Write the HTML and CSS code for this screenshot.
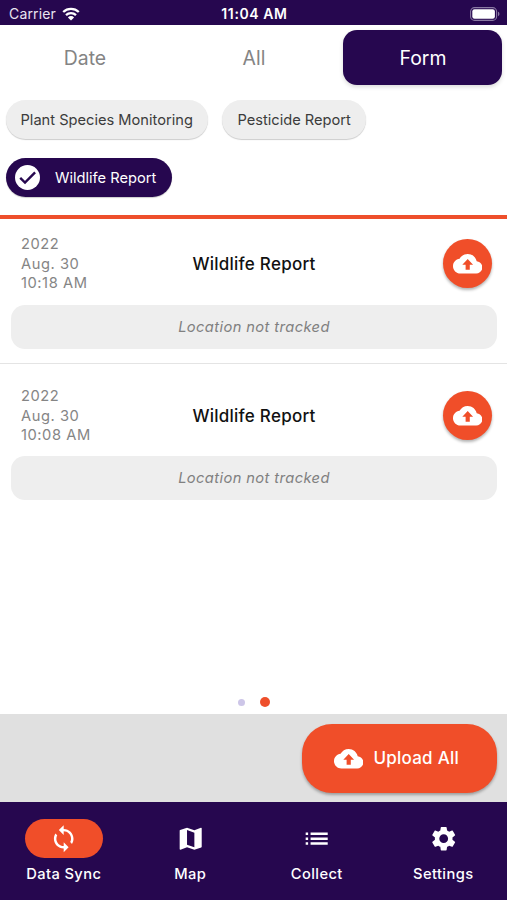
FILE: index.html
```html
<!DOCTYPE html>
<html lang="en">
<head>
    <meta charset="UTF-8">
    <title>Data Sync</title>
    <link rel="stylesheet" href="styles.css">
</head>
<body>
    <svg class="sprite" width="0" height="0">
        <symbol id="cloud" viewBox="0 0 24 24">
            <path d="M19.35 10.04C18.67 6.59 15.64 4 12 4 9.11 4 6.6 5.64 5.35 8.04 2.34 8.36 0 10.91 0 14c0 3.31 2.69 6 6 6h13c2.76 0 5-2.24 5-5 0-2.64-2.05-4.78-4.65-4.96zM13.7 12.8v4.2h-3.4v-4.2H7.6L12 8.1l4.4 4.7H13.7z"/>
        </symbol>
    </svg>
    <div class="app">
        <div class="status-bar">
            <div class="carrier">
                <span>Carrier</span>
                <svg class="wifi" viewBox="0 0 18 14">
                    <path d="M1.2 5a11.2 11.2 0 0 1 15.6 0" fill="none" stroke="#fff" stroke-width="2.3"/>
                    <path d="M4 8.2a7.2 7.2 0 0 1 10 0" fill="none" stroke="#fff" stroke-width="2.3"/>
                    <path d="M9 13.6L5.9 10.4a4.4 4.4 0 0 1 6.2 0z" fill="#fff"/>
                </svg>
            </div>
            <span class="time">11:04 AM</span>
            <div class="battery-wrap">
                <svg class="battery" viewBox="0 0 30 14">
                    <rect x=".6" y=".6" width="26" height="12.8" rx="4" fill="none" stroke="#8a79a3" stroke-width="1.1"/>
                    <rect x="2.3" y="2.3" width="22.6" height="9.4" rx="2.2" fill="#fff"/>
                    <path d="M28 4.8c1.9.6 1.9 3.8 0 4.4z" fill="#8a79a3"/>
                </svg>
            </div>
        </div>

        <div class="tabs">
            <div class="tab">Date</div>
            <div class="tab">All</div>
            <div class="tab active">Form</div>
        </div>

        <div class="chips">
            <div class="chip">Plant Species Monitoring</div>
            <div class="chip">Pesticide Report</div>
            <div class="chip selected">
                <svg class="check" viewBox="0 0 24 24"><circle cx="12" cy="12" r="12"/><path d="M5 12.4l4.6 4.5L19.3 7"/></svg>
                Wildlife Report
            </div>
        </div>

        <div class="list">
            <div class="item">
                <div class="row">
                    <div class="date">2022<br>Aug. 30<br>10:18 AM</div>
                    <div class="name">Wildlife Report</div>
                    <div class="upload"><svg class="icon"><use href="#cloud"/></svg></div>
                </div>
                <div class="location">Location not tracked</div>
            </div>
            <div class="item">
                <div class="row">
                    <div class="date">2022<br>Aug. 30<br>10:08 AM</div>
                    <div class="name">Wildlife Report</div>
                    <div class="upload"><svg class="icon"><use href="#cloud"/></svg></div>
                </div>
                <div class="location">Location not tracked</div>
            </div>
        </div>

        <div class="dots">
            <span class="dot"></span>
            <span class="dot current"></span>
        </div>

        <div class="actions">
            <div class="upload-all">
                <svg class="icon"><use href="#cloud"/></svg>
                <span>Upload All</span>
            </div>
        </div>

        <div class="nav">
            <div class="nav-item">
                <div class="pill on"><svg class="icon" viewBox="0 0 24 24"><path d="M12 4V1L8 5l4 4V6c3.31 0 6 2.69 6 6 0 1.01-.25 1.97-.7 2.8l1.46 1.46C19.54 15.03 20 13.57 20 12c0-4.42-3.58-8-8-8zm0 14c-3.31 0-6-2.69-6-6 0-1.01.25-1.97.7-2.8L5.24 7.74C4.46 8.97 4 10.43 4 12c0 4.42 3.58 8 8 8v3l4-4-4-4v3z"/></svg></div>
                <span>Data Sync</span>
            </div>
            <div class="nav-item">
                <div class="pill"><svg class="icon" viewBox="0 0 24 24"><path d="M20.5 3l-.16.03L15 5.1 9 3 3.36 4.9c-.21.07-.36.25-.36.48V20.5c0 .28.22.5.5.5l.16-.03L9 18.9l6 2.1 5.64-1.9c.21-.07.36-.25.36-.48V3.5c0-.28-.22-.5-.5-.5zM15 19l-6-2.11V5l6 2.11V19z"/></svg></div>
                <span>Map</span>
            </div>
            <div class="nav-item">
                <div class="pill"><svg class="icon" viewBox="0 0 24 24"><path d="M3 13h2v-2H3v2zm0 4h2v-2H3v2zm0-8h2V7H3v2zm4 4h14v-2H7v2zm0 4h14v-2H7v2zM7 7v2h14V7H7z"/></svg></div>
                <span>Collect</span>
            </div>
            <div class="nav-item">
                <div class="pill"><svg class="icon" viewBox="0 0 24 24"><path d="M19.14 12.94c.04-.3.06-.61.06-.94 0-.32-.02-.64-.07-.94l2.03-1.58c.18-.14.23-.41.12-.61l-1.92-3.32c-.12-.22-.37-.29-.59-.22l-2.39.96c-.5-.38-1.03-.7-1.62-.94l-.36-2.54c-.04-.24-.24-.41-.48-.41h-3.84c-.24 0-.43.17-.47.41l-.36 2.54c-.59.24-1.13.57-1.62.94l-2.39-.96c-.22-.08-.47 0-.59.22L2.74 8.87c-.12.21-.08.47.12.61l2.03 1.58c-.05.3-.09.63-.09.94s.02.64.07.94l-2.03 1.58c-.18.14-.23.41-.12.61l1.92 3.32c.12.22.37.29.59.22l2.39-.96c.5.38 1.03.7 1.62.94l.36 2.54c.05.24.24.41.48.41h3.84c.24 0 .44-.17.47-.41l.36-2.54c.59-.24 1.13-.56 1.62-.94l2.39.96c.22.08.47 0 .59-.22l1.92-3.32c.12-.22.07-.47-.12-.61l-2.01-1.58zM12 15.6c-1.98 0-3.6-1.62-3.6-3.6s1.62-3.6 3.6-3.6 3.6 1.62 3.6 3.6-1.62 3.6-3.6 3.6z"/></svg></div>
                <span>Settings</span>
            </div>
        </div>
    </div>
</body>
</html>
```
FILE: styles.css
```css
* {
    box-sizing: border-box;
}

body {
    margin: 0;
    font-family: Inter, "Liberation Sans", sans-serif;
    background: #fff;
}

.sprite {
    display: none;
}

.app {
    height: 900px;
    display: flex;
    flex-direction: column;
    overflow: hidden;
}

.icon {
    width: 29.4px;
    height: 29.4px;
    fill: #fff;
}

.status-bar {
    height: 25px;
    padding: 2px 7px 0 9px;
    display: grid;
    grid-template-columns: 1fr auto 1fr;
    align-items: center;
    background: #26074f;
    color: #fff;
    font-size: 14px;
}

.carrier {
    display: flex;
    align-items: center;
    gap: 6px;
    color: #e9e4f0;
    letter-spacing: 0.15px;
}

.wifi {
    width: 18px;
    height: 14px;
}

.time {
    font-weight: 600;
    letter-spacing: 0.6px;
}

.battery-wrap {
    display: flex;
    justify-content: flex-end;
}

.battery {
    width: 30px;
    height: 14px;
}

.tabs {
    display: flex;
    height: 75px;
    padding-top: 5px;
}

.tab {
    flex: 1;
    height: 55px;
    margin: 0 5px;
    padding-left: 1px;
    border-radius: 14px;
    display: flex;
    align-items: center;
    justify-content: center;
    font-size: 19.4px;
    color: #848484;
}

.tab.active {
    background: #26074f;
    color: #fff;
    box-shadow: 0 2px 4px rgba(0, 0, 0, 0.15);
}

.chips {
    height: 119px;
    padding: 0 5.5px;
    display: flex;
    flex-wrap: wrap;
    align-content: flex-start;
    gap: 19px 14px;
    border-bottom: 4px solid #ee4f2b;
}

.chip {
    height: 39px;
    padding: 0 15.5px 0 15px;
    border-radius: 20px;
    display: flex;
    align-items: center;
    background: #eee;
    color: #3c3c3c;
    font-size: 14.65px;
    box-shadow: 0 1px 1px rgba(0, 0, 0, 0.2);
}

.chip.selected {
    padding-left: 9.5px;
    gap: 15px;
    background: #26074f;
    color: #fff;
}

.check {
    width: 25px;
    height: 25px;
    fill: #fff;
}

.check path {
    fill: none;
    stroke: #26074f;
    stroke-width: 2.3;
}

.list {
    flex: 1;
}

.item {
    height: 151.5px;
    padding: 15px 10px 0 11px;
}

.item:first-child {
    height: 145px;
    border-bottom: 1.5px solid #e4e4e4;
}

.item + .item {
    padding-top: 22px;
}

.row {
    height: 59px;
    padding: 0 5px;
    display: grid;
    grid-template-columns: 1fr auto 1fr;
    align-items: center;
}

.date {
    padding: 1px 0 0 5px;
    font-size: 14.7px;
    line-height: 19.5px;
    letter-spacing: 0.55px;
    color: #858585;
}

.name {
    font-size: 17px;
    font-weight: 500;
    letter-spacing: 0.25px;
    color: #111;
}

.upload {
    width: 49px;
    height: 49px;
    justify-self: end;
    border-radius: 50%;
    display: flex;
    align-items: center;
    justify-content: center;
    background: #f04e29;
    box-shadow: 0 2px 3px rgba(0, 0, 0, 0.3);
}

.location {
    height: 44px;
    margin-top: 12px;
    border-radius: 14px;
    display: flex;
    align-items: center;
    justify-content: center;
    background: #eee;
    color: #808080;
    font-size: 14.7px;
    font-style: italic;
    letter-spacing: 0.4px;
}

.item + .item .location {
    margin-top: 11px;
}

.dots {
    height: 24px;
    padding-left: 1px;
    display: flex;
    align-items: center;
    justify-content: center;
    gap: 15px;
}

.dot {
    width: 7px;
    height: 7px;
    border-radius: 50%;
    background: #cdc6e8;
}

.dot.current {
    width: 10px;
    height: 10px;
    background: #ee4f2b;
}

.actions {
    height: 88px;
    padding: 10px 10px 0;
    display: flex;
    justify-content: flex-end;
    background: #e0e0e0;
}

.upload-all {
    width: 195px;
    height: 68.5px;
    padding-right: 6px;
    border-radius: 30px;
    display: flex;
    align-items: center;
    justify-content: center;
    gap: 10px;
    background: #f04e29;
    color: #fff;
    font-size: 17px;
    font-weight: 500;
    letter-spacing: 0.25px;
    box-shadow: 0 2px 3px rgba(0, 0, 0, 0.3);
}

.nav {
    height: 98px;
    padding: 17px 0.5px 0;
    display: flex;
    background: #26074f;
    color: #fff;
}

.nav-item {
    flex: 1;
    display: flex;
    flex-direction: column;
    align-items: center;
    gap: 6px;
    font-size: 14.7px;
    line-height: 20px;
    font-weight: 500;
    letter-spacing: 0.4px;
}

.pill {
    width: 78px;
    height: 39px;
    border-radius: 20px;
    display: flex;
    align-items: center;
    justify-content: center;
}

.pill.on {
    background: #f04e29;
}
```
